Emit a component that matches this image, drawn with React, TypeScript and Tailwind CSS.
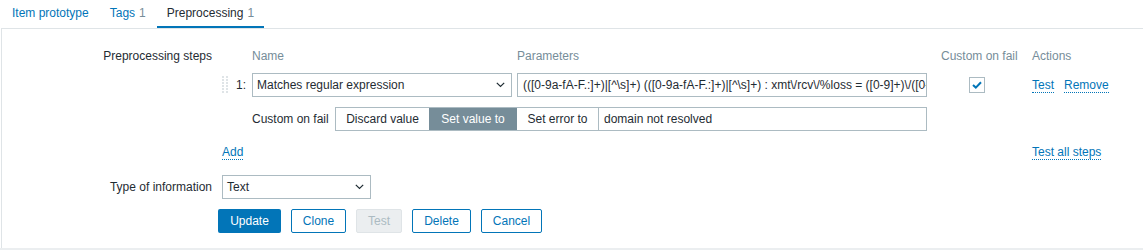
import React from "react";

const Chevron = () => (
  <svg width="9" height="6" viewBox="0 0 9 6" className="shrink-0">
    <path d="M0.8 0.8 L4.5 4.5 L8.2 0.8" fill="none" stroke="#1f2c33" strokeWidth="1.2" />
  </svg>
);

const Handle = () => (
  <svg width="7" height="19" viewBox="0 0 7 19">
    {[0, 3, 6, 9, 12, 15].map((y) => (
      <g key={y}>
        <rect x="0" y={y} width="2" height="2" fill="#dfe4e7" />
        <rect x="4" y={y} width="2" height="2" fill="#dfe4e7" />
      </g>
    ))}
  </svg>
);

const Link = ({ children }: { children: React.ReactNode }) => (
  <span className="text-[#0275b8] border-b border-dotted border-[#0275b8] leading-[14px]">{children}</span>
);

export default function App() {
  return (
    <div
      className="w-[1143px] h-[250px] bg-[#ebeef0] flex flex-col text-[12px] text-[#1f2c33]"
      style={{ fontFamily: '"Liberation Sans", Arial, sans-serif' }}
    >
      {/* Tabs */}
      <div className="bg-white h-[28px] flex pl-[2px] gap-[1px] shrink-0">
        <div className="h-[28px] px-[10px] flex items-center border-b-2 border-transparent text-[#0275b8]">Item prototype</div>
        <div className="h-[28px] px-[10px] flex items-center border-b-2 border-transparent text-[#0275b8]">
          Tags<span className="text-[#768d99] ml-[4px]">1</span>
        </div>
        <div className="h-[28px] px-[10px] flex items-center border-b-2 border-[#0275b8] text-[#1f2c33]">
          Preprocessing<span className="text-[#768d99] ml-[4px]">1</span>
        </div>
      </div>

      {/* Card */}
      <div className="bg-white h-[220px] flex">
        <div className="w-[1px] bg-white" />
        <div className="flex-1 border-l border-t border-[#dfe4e7] pt-[18px] flex flex-col">
          {/* Preprocessing steps */}
          <div className="flex">
            <div className="w-[220px] pr-[10px] text-right leading-[18px] shrink-0">Preprocessing steps</div>
            <div className="flex flex-col">
              {/* header */}
              <div className="flex h-[18px] items-center text-[#768d99]">
                <div className="w-[30px]" />
                <div className="w-[265px]">Name</div>
                <div className="w-[424px]">Parameters</div>
                <div className="w-[91px]">Custom on fail</div>
                <div>Actions</div>
              </div>
              {/* row 1 */}
              <div className="flex h-[24px] items-center mt-[8px]">
                <div className="w-[10px] flex items-center">
                  <Handle />
                </div>
                <div className="w-[14px] text-right">1:</div>
                <div className="ml-[6px] w-[260px] h-[24px] border border-[#acbbc2] bg-white flex items-center justify-between pl-[4px] pr-[6px]">
                  <span>Matches regular expression</span>
                  <Chevron />
                </div>
                <div className="ml-[5px] w-[410px] h-[24px] border border-[#acbbc2] bg-white flex items-center pl-[5px] pr-[1px] overflow-hidden whitespace-nowrap">
                  {"(([0-9a-fA-F.:]+)|[^\\s]+) (([0-9a-fA-F.:]+)|[^\\s]+) : xmt\\/rcv\\/%loss = ([0-9]+)\\/([0-9]+)\\/([0-9]+)%"}
                </div>
                <div className="ml-[14px] w-[91px] flex items-center pl-[28px]">
                  <div className="w-[16px] h-[16px] border border-[#acbbc2] bg-white flex items-center justify-center">
                    <svg width="10" height="8" viewBox="0 0 10 8">
                      <path d="M1 4 L3.8 6.6 L9 1.2" fill="none" stroke="#0275b8" strokeWidth="2" />
                    </svg>
                  </div>
                </div>
                <div className="flex gap-[10px]">
                  <Link>Test</Link>
                  <Link>Remove</Link>
                </div>
              </div>
              {/* row 2 */}
              <div className="flex h-[24px] items-center mt-[10px]">
                <div className="w-[30px]" />
                <div className="w-[83px]">Custom on fail</div>
                <div className="flex h-[24px] border border-[#acbbc2] bg-white">
                  <div className="w-[93px] flex items-center justify-center">Discard value</div>
                  <div className="w-[88px] flex items-center justify-center bg-[#768d99] text-white">Set value to</div>
                  <div className="w-[82px] flex items-center justify-center border-r border-[#acbbc2]">Set error to</div>
                  <div className="w-[327px] flex items-center pl-[5px]">domain not resolved</div>
                </div>
              </div>
              {/* add row */}
              <div className="flex h-[18px] items-center mt-[12px]">
                <div className="w-[810px]">
                  <Link>Add</Link>
                </div>
                <Link>Test all steps</Link>
              </div>
            </div>
          </div>

          {/* Type of information */}
          <div className="flex items-center mt-[14px]">
            <div className="w-[220px] pr-[10px] text-right shrink-0">Type of information</div>
            <div className="w-[149px] h-[24px] border border-[#acbbc2] bg-white flex items-center justify-between pl-[4px] pr-[6px]">
              <span>Text</span>
              <Chevron />
            </div>
          </div>

          {/* Buttons */}
          <div className="flex items-center gap-[10px] mt-[10px] pl-[216px]">
            <div className="h-[24px] w-[63px] rounded-[2px] bg-[#0275b8] text-white flex items-center justify-center">Update</div>
            <div className="h-[24px] w-[55px] rounded-[2px] border border-[#0275b8] text-[#0275b8] bg-white flex items-center justify-center">Clone</div>
            <div className="h-[24px] w-[46px] rounded-[2px] border border-[#dfe4e7] text-[#acbbc2] bg-[#ebeef0] flex items-center justify-center">Test</div>
            <div className="h-[24px] w-[59px] rounded-[2px] border border-[#0275b8] text-[#0275b8] bg-white flex items-center justify-center">Delete</div>
            <div className="h-[24px] w-[61px] rounded-[2px] border border-[#0275b8] text-[#0275b8] bg-white flex items-center justify-center">Cancel</div>
          </div>
        </div>
      </div>
    </div>
  );
}
